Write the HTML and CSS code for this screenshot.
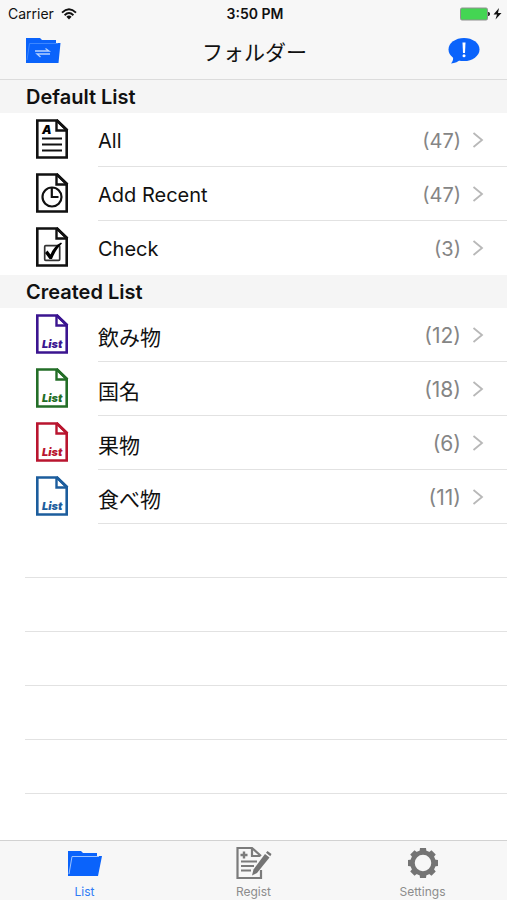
FILE: index.html
```html
<!DOCTYPE html>
<html lang="ja">
<head>
    <meta charset="UTF-8">
    <meta name="viewport" content="width=device-width, initial-scale=1">
    <title>フォルダー</title>
    <link rel="stylesheet" href="styles.css">
</head>
<body>
<!-- 共通アイコン -->
<svg class="defs" aria-hidden="true">
    <symbol id="doc" viewBox="0 0 34 40">
        <path d="M2.3 1.5H22L31.700 11V38.5H2.3Z" fill="none" stroke="currentColor" stroke-width="2.6"/>
        <path d="M21.500 2V11.500H31.500" fill="none" stroke="currentColor" stroke-width="2.4"/>
        <path d="M21.500 1L32.500 11.500" fill="none" stroke="currentColor" stroke-width="2.6"/>
    </symbol>
    <symbol id="arrow" viewBox="0 0 12 18">
        <path d="M1.5 2L10 9L1.5 16" fill="none" stroke="currentColor" stroke-width="1.8"/>
    </symbol>
</svg>

<div class="status">
    <div class="carrier">
        <span>Carrier</span>
        <svg width="16" height="12" viewBox="0 0 16 12">
            <path d="M1 4.6Q8 -2 15 4.6M3.6 7.2Q8 3 12.4 7.2" fill="none" stroke="#111" stroke-width="1.9"/>
            <path d="M5.4 8.7Q8 6.5 10.6 8.7L8 11.5Z" fill="#111"/>
        </svg>
    </div>
    <div class="time">3:50 PM</div>
    <div class="battery">
        <svg width="43" height="14" viewBox="0 0 43 14">
            <rect x="1.5" y="1" width="27" height="12" rx="1.5" fill="#44d553" stroke="#909090"/>
            <path d="M29.5 5Q32 7 29.5 9Z" fill="#333" stroke="#333"/>
            <path d="M40 1L34.500 7.500H38L36.5 12.5L42.500 6H39Z" fill="#111"/>
        </svg>
    </div>
</div>

<header class="nav">
    <button type="button" aria-label="並べ替え">
        <svg width="36" height="28" viewBox="0 0 36 28">
            <path d="M1 1H15L17 3H31V6H35.500L33.500 26H1Z" fill="#0a63fb"/>
            <path d="M2 23L4.5 6.500H33" fill="none" stroke="#3d87ff" stroke-width="1"/>
            <path d="M10 14H24L20.5 11.5M25 17H12L15.5 20" fill="none" stroke="#b5d2ff" stroke-width="1.3"/>
        </svg>
    </button>
    <h1>フォルダー</h1>
    <button type="button" aria-label="お知らせ">
        <svg width="32" height="28" viewBox="0 0 32 28">
            <ellipse cx="16" cy="12.5" rx="15.5" ry="11.5" fill="#0a63fb"/>
            <path d="M5 18Q6 23 3 26.500Q9 26 13 22Z" fill="#0a63fb"/>
            <path d="M14.5 5.500H17.5L17 16H15Z" fill="#fff"/>
            <circle cx="16" cy="18.8" r="1.5" fill="#fff"/>
        </svg>
    </button>
</header>

<main>
    <h2>Default List</h2>
    <ul class="default-list">
        <li>
            <svg class="icon" viewBox="0 0 34 40">
                <use href="#doc"/>
                <text class="doc-letter" x="7" y="15">A</text>
                <path d="M7 19.5H27M7 25.5H27M7 31.5H27" stroke="#111" stroke-width="2.2"/>
            </svg>
            <a href="#all"><span>All</span><span class="count">(47)</span><svg class="arrow"><use href="#arrow"/></svg></a>
        </li>
        <li>
            <svg class="icon" viewBox="0 0 34 40">
                <use href="#doc"/>
                <circle cx="17" cy="24" r="9.5" fill="none" stroke="#111" stroke-width="2.2"/>
                <path d="M16.8 15V24H23.500" fill="none" stroke="#111" stroke-width="2.2"/>
            </svg>
            <a href="#recent"><span>Add Recent</span><span class="count">(47)</span><svg class="arrow"><use href="#arrow"/></svg></a>
        </li>
        <li>
            <svg class="icon" viewBox="0 0 34 40">
                <use href="#doc"/>
                <rect x="9.700" y="18.700" width="15" height="14.600" rx="1" fill="none" stroke="#333" stroke-width="1.7"/>
                <path d="M10 26L12.5 23.500L15.5 27.5Q19 19 26 15.5L27 16.5Q21 22 17 32H14.5Z" fill="#000"/>
            </svg>
            <a href="#check"><span>Check</span><span class="count">(3)</span><svg class="arrow"><use href="#arrow"/></svg></a>
        </li>
    </ul>

    <h2>Created List</h2>
    <ul class="created-list">
        <li>
            <svg class="icon purple" viewBox="0 0 34 40">
                <use href="#doc"/>
                <text class="doc-list" x="7" y="34">List</text>
            </svg>
            <a href="#drink"><span>飲み物</span><span class="count">(12)</span><svg class="arrow"><use href="#arrow"/></svg></a>
        </li>
        <li>
            <svg class="icon green" viewBox="0 0 34 40">
                <use href="#doc"/>
                <text class="doc-list" x="7" y="34">List</text>
            </svg>
            <a href="#country"><span>国名</span><span class="count">(18)</span><svg class="arrow"><use href="#arrow"/></svg></a>
        </li>
        <li>
            <svg class="icon red" viewBox="0 0 34 40">
                <use href="#doc"/>
                <text class="doc-list" x="7" y="34">List</text>
            </svg>
            <a href="#fruit"><span>果物</span><span class="count">(6)</span><svg class="arrow"><use href="#arrow"/></svg></a>
        </li>
        <li>
            <svg class="icon blue" viewBox="0 0 34 40">
                <use href="#doc"/>
                <text class="doc-list" x="7" y="34">List</text>
            </svg>
            <a href="#food"><span>食べ物</span><span class="count">(11)</span><svg class="arrow"><use href="#arrow"/></svg></a>
        </li>
    </ul>
    <!-- 空の行 -->
    <div class="empty"></div>
    <div class="empty"></div>
    <div class="empty"></div>
    <div class="empty"></div>
    <div class="empty"></div>
</main>

<nav class="tabs">
    <a class="active" href="#list">
        <svg width="36" height="34" viewBox="0 0 36 34">
            <path d="M1 5H14L16 7H30V10H35L31 30H1Z" fill="#0a63fb"/>
            <path d="M2 28L5 10.5H32" fill="none" stroke="#9cc3ff" stroke-width="1"/>
        </svg>
        <span>List</span>
    </a>
    <a href="#regist">
        <svg width="36" height="34" viewBox="0 0 36 34">
            <path d="M25 24V32H1.5V2H16L25 10M16 2V10H24" fill="none" stroke="#7b7b7b" stroke-width="2.2"/>
            <path d="M4.500 9H11.500M8 5.5V12.5" stroke="#7b7b7b" stroke-width="2.4"/>
            <path d="M5 15.5H21M5 20H18M5 24.5H15" stroke="#7b7b7b" stroke-width="1.8"/>
            <path d="M29 8L33.500 11.500L21 27L16 29.5L17.500 23.500Z" fill="#747474"/>
            <path d="M30 6.800L31.500 5L35.500 8L34.300 10.200Z" fill="#747474"/>
        </svg>
        <span>Regist</span>
    </a>
    <a href="#settings">
        <svg width="36" height="34" viewBox="0 0 36 34">
            <circle cx="18" cy="17" r="10.5" fill="none" stroke="#747474" stroke-width="4.5"/>
            <g fill="#747474">
                <path id="tooth" d="M14.500 6L15 2H21L21.500 6Z"/>
                <use href="#tooth" transform="rotate(45 18 17)"/>
                <use href="#tooth" transform="rotate(90 18 17)"/>
                <use href="#tooth" transform="rotate(135 18 17)"/>
                <use href="#tooth" transform="rotate(180 18 17)"/>
                <use href="#tooth" transform="rotate(225 18 17)"/>
                <use href="#tooth" transform="rotate(270 18 17)"/>
                <use href="#tooth" transform="rotate(315 18 17)"/>
            </g>
        </svg>
        <span>Settings</span>
    </a>
</nav>
</body>
</html>
```
FILE: styles.css
```css
*{
    margin: 0;
    padding: 0;
    box-sizing: border-box;
}
body{
    display: flex;
    flex-direction: column;
    min-height: 100vh;
    background: white;
    color: #111;
    font-family: Inter, "Noto Sans CJK JP", sans-serif;
}
a{
    color: inherit;
    text-decoration: none;
}
svg{
    display: block;
    flex-shrink: 0;
}
.defs{
    position: absolute;
    width: 0;
    height: 0;
}
/* ステータスバー */
.status{
    display: grid;
    grid-template-columns: 1fr auto 1fr;
    align-items: center;
    height: 27px;
    padding: 0 5px 0 8px;
    background: #f7f7f7;
    font-size: 14px;
}
.carrier{
    display: flex;
    align-items: center;
    gap: 7px;
}
.time{
    font-weight: 600;
}
.battery{
    display: flex;
    justify-content: flex-end;
}
/* ナビゲーション */
.nav{
    display: flex;
    align-items: center;
    justify-content: space-between;
    height: 53px;
    padding: 0 27px 4px 25px;
    background: #f7f7f7;
    border-bottom: 1px solid #dcdcdc;
}
.nav button{
    border: none;
    background: none;
}
.nav h1{
    font-size: 21px;
    font-weight: 400;
}
main{
    flex: 1;
}
h2{
    height: 33px;
    padding-left: 26px;
    background: #f5f5f5;
    font-size: 20px;
    font-weight: 600;
    line-height: 35px;
}
ul{
    list-style: none;
}
li{
    display: flex;
    align-items: flex-start;
    gap: 29px;
    height: 54px;
    padding-left: 35px;
}
.icon{
    width: 34px;
    height: 40px;
    margin-top: 6px;
}
.purple{
    color: #3b1590;
}
.green{
    color: #236e27;
}
.red{
    color: #b9152f;
}
.blue{
    color: #1c5d9d;
}
.doc-letter{
    font: italic 900 12px Inter, sans-serif;
}
.doc-list{
    font: italic 900 11px Inter, sans-serif;
    fill: currentColor;
}
li a{
    flex: 1;
    display: flex;
    align-items: center;
    height: 54px;
    padding: 2px 23px 0 0;
    border-bottom: 1px solid #e2e2e2;
    font-size: 20px;
}
.default-list li:last-child a{
    border-bottom-color: transparent;
}
.created-list a{
    font-size: 21px;
}
.count{
    margin-left: auto;
    color: #858585;
}
.arrow{
    width: 12px;
    height: 18px;
    margin: 0 0 2px 11px;
    color: #b8b8b8;
}
.empty{
    height: 54px;
    margin-left: 25px;
    border-bottom: 1px solid #e2e2e2;
}
/* タブバー */
.tabs{
    position: sticky;
    bottom: 0;
    display: flex;
    height: 60px;
    background: #f7f7f7;
    border-top: 1px solid #d2d2d2;
}
.tabs a{
    flex: 1;
    display: flex;
    flex-direction: column;
    align-items: center;
    gap: 4px;
    padding-top: 5px;
    color: #8c8c8c;
    font-size: 12px;
    line-height: 16px;
}
.tabs .active{
    color: #2f7bf6;
}
```
